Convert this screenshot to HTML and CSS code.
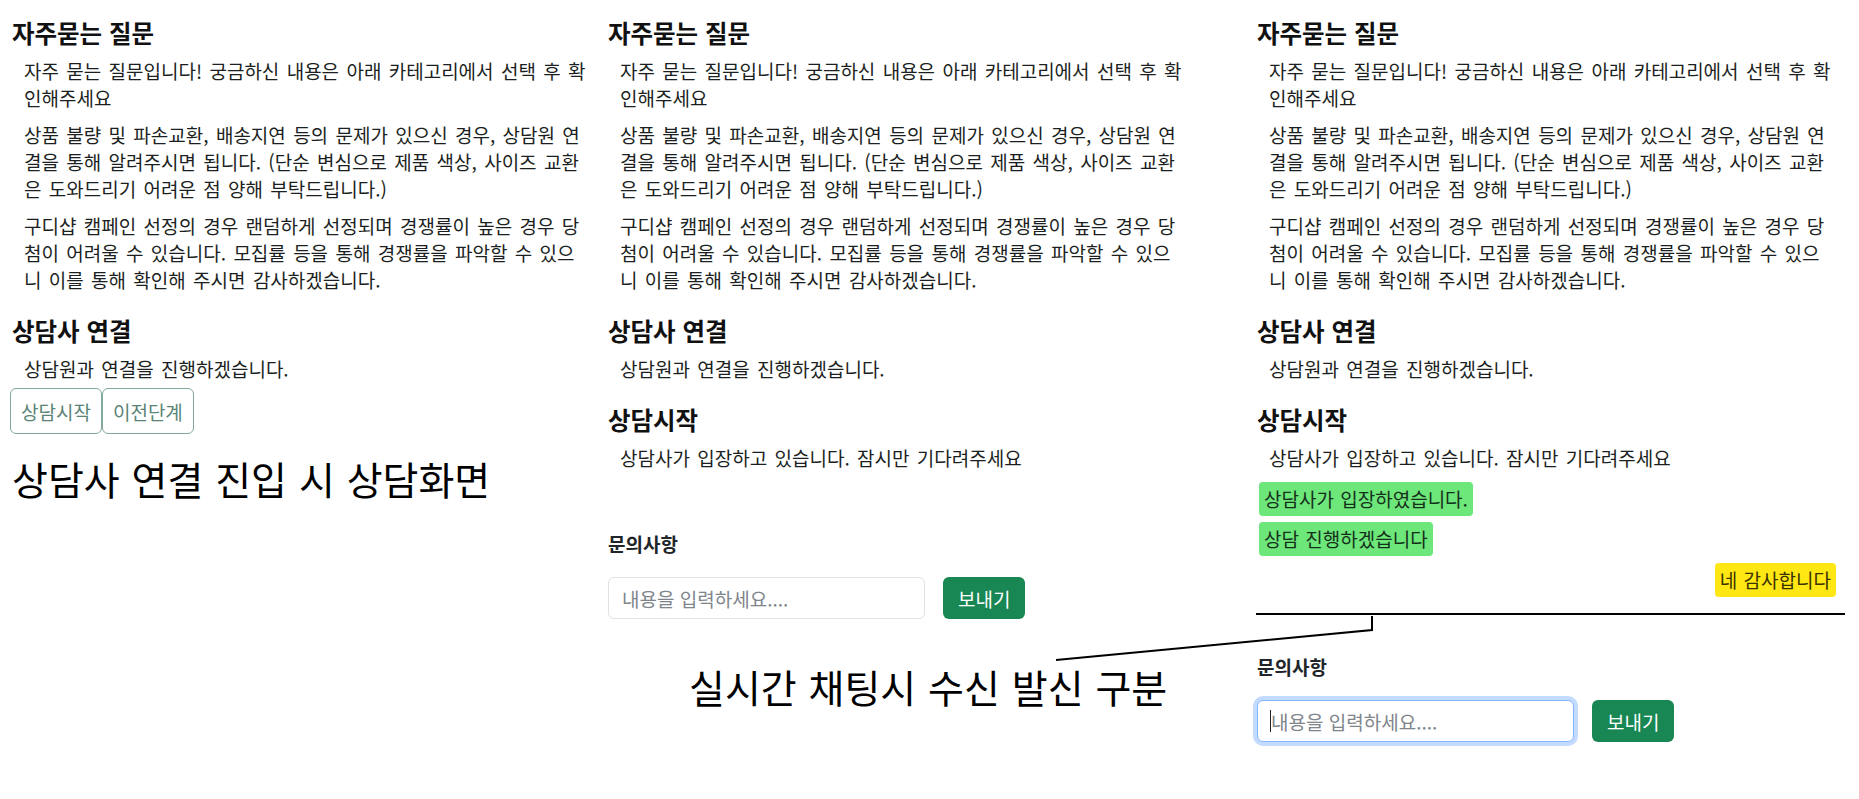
FILE: index.html
```html
<!DOCTYPE html>
<html lang="ko">
<head>
<meta charset="utf-8">
<title>상담 화면</title>
<link rel="stylesheet" href="styles.css">
</head>
<body>
<div class="board">
  <section class="panel panel-1">
    <div class="block">
      <h2 class="title">자주묻는 질문</h2>
      <p class="desc">자주 묻는 질문입니다! 궁금하신 내용은 아래 카테고리에서 선택 후 확<br>인해주세요</p>
      <p class="desc">상품 불량 및 파손교환, 배송지연 등의 문제가 있으신 경우, 상담원 연<br>결을 통해 알려주시면 됩니다. (단순 변심으로 제품 색상, 사이즈 교환<br>은 도와드리기 어려운 점 양해 부탁드립니다.)</p>
      <p class="desc">구디샵 캠페인 선정의 경우 랜덤하게 선정되며 경쟁률이 높은 경우 당<br>첨이 어려울 수 있습니다. 모집률 등을 통해 경쟁률을 파악할 수 있으<br>니 이를 통해 확인해 주시면 감사하겠습니다.</p>
    </div>
    <div class="block">
      <h2 class="title">상담사 연결</h2>
      <p class="desc">상담원과 연결을 진행하겠습니다.</p>
      <div class="btn-row">
        <button class="btn-outline" type="button">상담시작</button>
        <button class="btn-outline" type="button">이전단계</button>
      </div>
    </div>
    <p class="caption">상담사 연결 진입 시 상담화면</p>
  </section>

  <section class="panel panel-2">
    <div class="block">
      <h2 class="title">자주묻는 질문</h2>
      <p class="desc">자주 묻는 질문입니다! 궁금하신 내용은 아래 카테고리에서 선택 후 확<br>인해주세요</p>
      <p class="desc">상품 불량 및 파손교환, 배송지연 등의 문제가 있으신 경우, 상담원 연<br>결을 통해 알려주시면 됩니다. (단순 변심으로 제품 색상, 사이즈 교환<br>은 도와드리기 어려운 점 양해 부탁드립니다.)</p>
      <p class="desc">구디샵 캠페인 선정의 경우 랜덤하게 선정되며 경쟁률이 높은 경우 당<br>첨이 어려울 수 있습니다. 모집률 등을 통해 경쟁률을 파악할 수 있으<br>니 이를 통해 확인해 주시면 감사하겠습니다.</p>
    </div>
    <div class="block">
      <h2 class="title">상담사 연결</h2>
      <p class="desc">상담원과 연결을 진행하겠습니다.</p>
    </div>
    <div class="block">
      <h2 class="title">상담시작</h2>
      <p class="desc">상담사가 입장하고 있습니다. 잠시만 기다려주세요</p>
    </div>
    <div class="chat chat-empty"></div>
    <form class="ask">
      <label class="ask-label" for="q1">문의사항</label>
      <div class="ask-row">
        <div class="input-wrap"><input id="q1" class="ask-input" type="text" placeholder="내용을 입력하세요...."></div>
        <button class="btn-send" type="button">보내기</button>
      </div>
    </form>
    <p class="caption caption-2">실시간 채팅시 수신 발신 구분</p>
  </section>

  <section class="panel panel-3">
    <div class="block">
      <h2 class="title">자주묻는 질문</h2>
      <p class="desc">자주 묻는 질문입니다! 궁금하신 내용은 아래 카테고리에서 선택 후 확<br>인해주세요</p>
      <p class="desc">상품 불량 및 파손교환, 배송지연 등의 문제가 있으신 경우, 상담원 연<br>결을 통해 알려주시면 됩니다. (단순 변심으로 제품 색상, 사이즈 교환<br>은 도와드리기 어려운 점 양해 부탁드립니다.)</p>
      <p class="desc">구디샵 캠페인 선정의 경우 랜덤하게 선정되며 경쟁률이 높은 경우 당<br>첨이 어려울 수 있습니다. 모집률 등을 통해 경쟁률을 파악할 수 있으<br>니 이를 통해 확인해 주시면 감사하겠습니다.</p>
    </div>
    <div class="block">
      <h2 class="title">상담사 연결</h2>
      <p class="desc">상담원과 연결을 진행하겠습니다.</p>
    </div>
    <div class="block">
      <h2 class="title">상담시작</h2>
      <p class="desc">상담사가 입장하고 있습니다. 잠시만 기다려주세요</p>
    </div>
    <div class="chat">
      <div class="msg msg-in">상담사가 입장하였습니다.</div>
      <div class="msg msg-in">상담 진행하겠습니다</div>
      <div class="msg msg-out">네 감사합니다</div>
    </div>
    <hr class="divider">
    <form class="ask">
      <label class="ask-label" for="q2">문의사항</label>
      <div class="ask-row">
        <div class="input-wrap"><input id="q2" class="ask-input is-focused" type="text" placeholder="내용을 입력하세요...."><span class="caret"></span></div>
        <button class="btn-send" type="button">보내기</button>
      </div>
    </form>
  </section>

  <svg class="annotation" width="1859" height="799" viewBox="0 0 1859 799" aria-hidden="true">
    <polyline points="1372,616 1372,630 1056,660" fill="none" stroke="#000" stroke-width="2"/>
  </svg>
</div>
</body>
</html>
```

FILE: styles.css
```css
html, body {
  margin: 0;
  padding: 0;
  background: #fff;
}

body {
  font-family: "Noto Sans CJK KR", "Noto Sans", sans-serif;
  color: #212529;
}

.board {
  position: relative;
  display: flex;
  align-items: flex-start;
  width: 1859px;
  height: 799px;
  overflow: hidden;
}

.panel {
  box-sizing: border-box;
  padding: 20px 0 0 12px;
}

.panel-1 { width: 596px; }
.panel-2 { width: 649px; }
.panel-3 { width: 614px; }

.block + .block {
  margin-top: 25px;
}

.title {
  margin: 0 0 11px;
  font-size: 24.5px;
  line-height: 26px;
  font-weight: 700;
  color: #111;
  white-space: nowrap;
}

.desc {
  margin: 0;
  padding-left: 12px;
  font-size: 19px;
  line-height: 27px;
  word-spacing: 2px;
  white-space: nowrap;
  color: #1c1f22;
}

.desc + .desc {
  margin-top: 10px;
}

.btn-row {
  display: flex;
  margin-top: 6px;
  margin-left: -2px;
}

.btn-outline {
  box-sizing: border-box;
  height: 46px;
  padding: 0 10px;
  border: 1px solid #82a89a;
  border-radius: 6px;
  background: #fff;
  color: #5a8476;
  font-family: inherit;
  font-size: 19px;
  line-height: 27px;
}

.caption {
  margin: 20px 0 0;
  font-size: 39px;
  line-height: 48px;
  font-weight: 400;
  word-spacing: 1px;
  color: #000;
  white-space: nowrap;
}

.caption-2 {
  margin-top: 43px;
  padding-left: 81px;
}

.chat {
  display: flex;
  flex-direction: column;
  align-items: flex-start;
  gap: 6px;
  margin-top: 11px;
  width: 579px;
}

.chat-empty {
  height: 61px;
  margin-top: 0;
}

.msg {
  padding: 3px 5px;
  border-radius: 4px;
  font-size: 19px;
  line-height: 28px;
  word-spacing: 1px;
}

.msg-in {
  margin-left: 2px;
  background: #6de67a;
  color: #14301a;
}

.msg-out {
  align-self: flex-end;
  margin-top: 1px;
  background: #ffe714;
  color: #3a3200;
}

.divider {
  width: 589px;
  margin: 16px 0 0 -1px;
  border: 0;
  border-top: 2px solid #000;
  height: 0;
}

.ask {
  margin: 0;
}

.panel-3 .ask {
  margin-top: 40px;
}

.ask-label {
  display: block;
  margin-bottom: 21px;
  font-size: 19px;
  line-height: 24px;
  font-weight: 700;
  color: #212529;
}

.ask-row {
  display: flex;
  align-items: center;
  gap: 18px;
}

.input-wrap {
  position: relative;
}

.ask-input {
  box-sizing: border-box;
  display: block;
  width: 317px;
  height: 42px;
  padding: 0 13px;
  border: 1px solid #dee2e6;
  border-radius: 6px;
  font-family: inherit;
  font-size: 19px;
  color: #212529;
  outline: none;
}

.ask-input::placeholder {
  color: #80858b;
}

.ask-input.is-focused {
  border-color: #86b7fe;
  box-shadow: 0 0 0 4px rgba(13, 110, 253, 0.25);
}

.caret {
  position: absolute;
  left: 13px;
  top: 10px;
  width: 1px;
  height: 22px;
  background: #222;
}

.btn-send {
  box-sizing: border-box;
  height: 42px;
  padding: 0 15px;
  border: 0;
  border-radius: 6px;
  background: #198754;
  color: #fff;
  font-family: inherit;
  font-size: 19px;
}

.annotation {
  position: absolute;
  left: 0;
  top: 0;
  pointer-events: none;
}
```
